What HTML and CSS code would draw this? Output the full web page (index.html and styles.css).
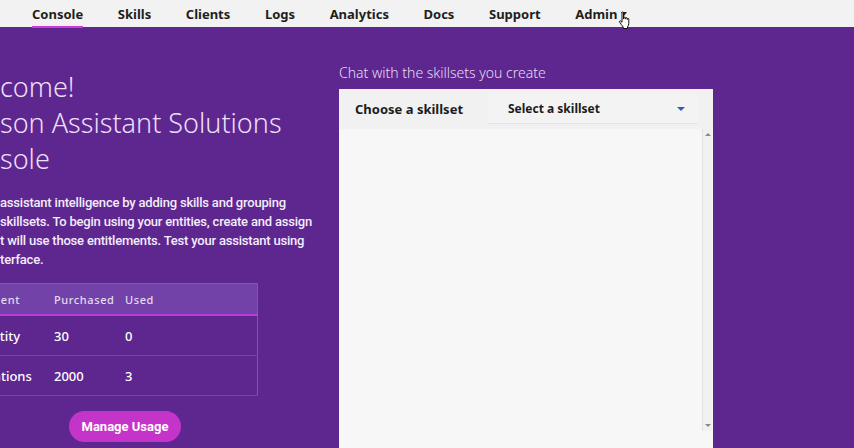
FILE: index.html
```html
<!DOCTYPE html>
<html>
<head>
<meta charset="utf-8">
<title>Watson Assistant Solutions Console</title>
<link rel="stylesheet" href="styles.css">
</head>
<body>
<nav class="topnav">
  <a class="nav-item active">Console</a>
  <a class="nav-item">Skills</a>
  <a class="nav-item">Clients</a>
  <a class="nav-item">Logs</a>
  <a class="nav-item">Analytics</a>
  <a class="nav-item">Docs</a>
  <a class="nav-item">Support</a>
  <a class="nav-item admin">Admin<span class="caret"></span>
    <svg class="cursor" width="14" height="19" viewBox="0 0 14 19"><path d="M4 1.5c0-.8 1.5-.8 1.5 0V8h.3V6.6c0-.8 1.5-.8 1.5 0V8h.3V7.2c0-.8 1.5-.8 1.5 0V8.4h.3V8c0-.8 1.4-.8 1.4 0v4.5c0 1.6-.8 2.6-1.3 3.4V17.5H5.2V16C4.1 14.7 2.6 12.6 1.6 11c-.5-.8.4-1.6 1.1-1l1.3 1.3z" fill="#fff" stroke="#111" stroke-width="1"/></svg>
  </a>
</nav>
<main class="page">
  <section class="intro">
    <h1 class="title">
      <span class="line"><span class="pre">Wel</span>come!</span>
      <span class="line"><span class="pre">Wat</span>son Assistant Solutions</span>
      <span class="line"><span class="pre">Con</span>sole</span>
    </h1>
    <p class="lead">
      <span class="line"><span class="pre">Build your </span>assistant intelligence by adding skills and grouping</span>
      <span class="line"><span class="pre">them into </span>skillsets. To begin using your entities, create and assign</span>
      <span class="line"><span class="pre">a client tha</span>t will use those entitlements. Test your assistant using</span>
      <span class="line"><span class="pre">this in</span>terface.</span>
    </p>
    <table class="usage">
      <thead>
        <tr><th class="c-name">Entitlement</th><th class="c-num">Purchased</th><th>Used</th></tr>
      </thead>
      <tbody>
        <tr><td class="c-name">Entity</td><td class="c-num">30</td><td>0</td></tr>
        <tr><td class="c-name">Conversations</td><td class="c-num">2000</td><td>3</td></tr>
      </tbody>
    </table>
    <button class="manage">Manage Usage</button>
  </section>
  <section class="chat">
    <h2 class="chat-label">Chat with the skillsets you create</h2>
    <div class="card">
      <div class="card-head">
        <span class="choose">Choose a skillset</span>
        <div class="select"><span>Select a skillset</span><span class="sel-caret"></span></div>
      </div>
      <div class="card-body">
        <div class="log"></div>
        <div class="scrollbar"><span class="arr up"></span><span class="arr down"></span></div>
      </div>
    </div>
  </section>
</main>
</body>
</html>
```

FILE: styles.css
```css
html, body {
  margin: 0;
  height: 448px;
  overflow: hidden;
}
body {
  background: #5e2790;
  font-family: "Noto Sans", sans-serif;
}
.topnav {
  height: 27px;
  background: #f2f2f2;
  display: flex;
  gap: 34.6px;
  padding-left: 32px;
}
.nav-item {
  position: relative;
  display: flex;
  align-items: center;
  font-size: 13px;
  font-weight: 700;
  color: #1e1e1e;
}
.nav-item.active::after {
  content: "";
  position: absolute;
  left: 0;
  right: 0;
  bottom: -1px;
  height: 2px;
  background: #d23ad8;
}
.caret {
  width: 0;
  height: 0;
  margin-left: 4px;
  border-left: 3px solid transparent;
  border-right: 3px solid transparent;
  border-top: 4px solid #222;
}
.cursor {
  position: absolute;
  left: 43px;
  top: 11px;
}
.page {
  display: flex;
}
.intro {
  margin-left: -58px;
  width: 316px;
  flex: none;
}
.line {
  display: block;
  white-space: nowrap;
}
.pre {
  display: inline-flex;
  justify-content: flex-end;
  width: 58px;
  white-space: nowrap;
  overflow: hidden;
}
.title {
  margin: 42px 0 0;
  font-size: 27px;
  line-height: 36px;
  font-weight: 300;
  color: #ecdff7;
}
.lead {
  margin: 16px 0 0;
  font-family: Roboto, sans-serif;
  font-size: 13px;
  line-height: 19px;
  font-weight: 500;
  letter-spacing: -0.2px;
  color: #f3ecfa;
}
.usage {
  margin-top: 14px;
  width: 316px;
  table-layout: fixed;
  border-collapse: collapse;
  border: 1px solid #b037c8;
  color: #fff;
}
.usage th {
  height: 30px;
  background: #7242a9;
  border-bottom: 2px solid #c23ad6;
  font-size: 11px;
  font-weight: 500;
  letter-spacing: 0.6px;
  color: #e4dcf0;
  text-align: left;
  padding: 0;
}
.usage td {
  height: 39px;
  font-size: 13px;
  font-weight: 500;
  padding: 0;
  border-bottom: 1px solid #8a36b6;
  white-space: nowrap;
}
.usage .c-name {
  width: 77px;
  padding-right: 34px;
  text-align: right;
}
.usage .c-num {
  width: 71px;
}
.manage {
  display: block;
  margin: 15px 0 0 127px;
  width: 112px;
  height: 31px;
  border: none;
  border-radius: 16px;
  background: #c534c9;
  color: #fff;
  font-family: Roboto, sans-serif;
  font-size: 13px;
  font-weight: 700;
}
.chat {
  margin-left: 81px;
  width: 374px;
  flex: none;
}
.chat-label {
  margin: 36px 0 6px;
  font-size: 14px;
  line-height: 20px;
  font-weight: 300;
  color: #e6dcf2;
}
.card {
  height: 380px;
  background: #f7f7f7;
  display: flex;
  flex-direction: column;
}
.card-head {
  height: 40px;
  background: #f1f1f1;
  display: flex;
  align-items: center;
}
.choose {
  width: 133px;
  padding-left: 16px;
  font-size: 13px;
  font-weight: 700;
  color: #1c1c1c;
}
.select {
  align-self: stretch;
  margin: 5px 0;
  width: 210px;
  box-sizing: border-box;
  padding: 0 13px 0 20px;
  display: flex;
  align-items: center;
  justify-content: space-between;
  background: #f3f3f3;
  border-bottom: 1px solid #e4e4e4;
  font-size: 12px;
  font-weight: 700;
  color: #1c1c1c;
}
.sel-caret {
  width: 0;
  height: 0;
  border-left: 4px solid transparent;
  border-right: 4px solid transparent;
  border-top: 4px solid #2d5fb8;
}
.card-body {
  flex: 1;
  display: flex;
}
.log {
  flex: 1;
}
.scrollbar {
  width: 10px;
  height: 302px;
  margin-right: 1px;
  background: #f1f1f1;
  border-left: 1px solid #e2e2e2;
  display: flex;
  flex-direction: column;
  justify-content: space-between;
  align-items: center;
  padding: 4px 0;
  box-sizing: border-box;
}
.arr {
  width: 0;
  height: 0;
  border-left: 3px solid transparent;
  border-right: 3px solid transparent;
}
.arr.up {
  border-bottom: 3px solid #8a8a8a;
}
.arr.down {
  border-top: 3px solid #8a8a8a;
}
```
